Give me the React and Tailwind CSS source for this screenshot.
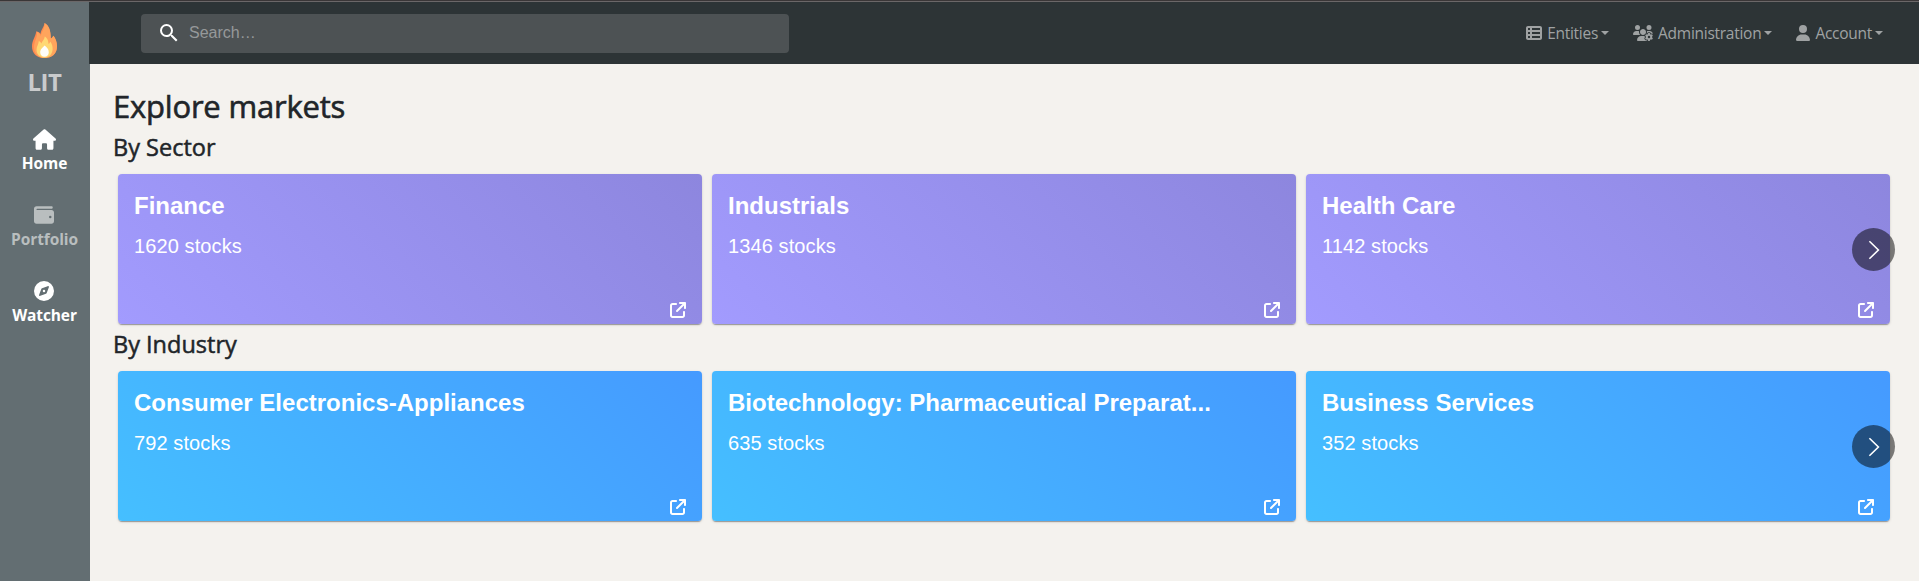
import { MdSearch } from "react-icons/md";
import {
  FaTableList,
  FaUsersGear,
  FaUser,
  FaHouse,
  FaWallet,
  FaCompass,
  FaArrowUpRightFromSquare,
} from "react-icons/fa6";

const sectors = [
  { name: "Finance", count: 1620 },
  { name: "Industrials", count: 1346 },
  { name: "Health Care", count: 1142 },
];

const industries = [
  { name: "Consumer Electronics-Appliances", count: 792 },
  { name: "Biotechnology: Pharmaceutical Preparat...", count: 635 },
  { name: "Business Services", count: 352 },
];

function Flame() {
  return (
    <svg width="25" height="35" viewBox="0 0 25 35" className="block">
      <path d="M12.6 0C17.5 2.8 18.6 8 18.8 15.4C20.3 15.2 20.7 13.5 21.5 12.8C23.6 15.5 25 19.2 25 23.2C25 30.8 20 35 12.5 35C5 35 0 30.6 0 23.4C0 17.2 3.5 14.2 4.3 8.2C6.4 8.8 7.6 9.6 8.5 11C9 6.4 11.8 4.6 12.6 0Z" fill="#ff8a50" />
      <path d="M12.6 0C17.5 2.8 18.6 8 18.8 15.4C20.3 15.2 20.7 13.5 21.5 12.8C23.6 15.5 25 19.2 25 23.2C25 30.8 20 35 12.5 35C7 35 2 31 2 24.5C2 18.5 5.5 15 5 9C7 9.6 8 11 8.8 13C9.5 8.5 13 5.5 12.6 0Z" fill="#ffa45c" />
      <path d="M12.8 13.4C16 15.6 16.2 18 16.6 21C17.5 20.6 17.9 19.6 18.2 18.6C20 21 20.8 23.5 20.6 26.5C20.2 31.5 17 34.6 12.5 34.6C8 34.6 4.5 31.6 4.5 26.8C4.5 23.4 6.6 21.4 6.8 18C8.2 18.4 8.8 19.4 9.4 20.6C9.8 18 12.4 16.8 12.8 13.4Z" fill="#ffd873" />
      <path d="M12.6 22.4C14.6 24 16.8 26 16.8 29.2C16.8 32 15 33.8 12.5 33.8C10 33.8 8.2 32 8.2 29.2C8.2 26 10.8 24.6 12.6 22.4Z" fill="#fffefa" />
    </svg>
  );
}

function SideItem({ icon, label, muted }) {
  return (
    <a className={`flex h-[76px] flex-col items-center ${muted ? "text-[#b9bebf]" : "text-white"}`}>
      <span className="flex h-6 items-center">{icon}</span>
      <span className="text-[15.5px] leading-6 font-bold tracking-[-0.1px]">{label}</span>
    </a>
  );
}

function NavLink({ icon, label }) {
  return (
    <a className="flex items-center text-[#9fa2a3]">
      {icon}
      <span className="ml-[5px] text-[15.5px] leading-6 tracking-[-0.27px]">{label}</span>
      <span className="ml-[3px] border-x-4 border-t-4 border-x-transparent border-t-[#9fa2a3]" />
    </a>
  );
}

function Card({ item, gradient }) {
  return (
    <article className={`flex h-[150px] flex-1 flex-col rounded-[4px] px-4 pt-4 text-white shadow-[0_2px_1px_-1px_rgba(0,0,0,0.2),0_1px_1px_0_rgba(0,0,0,0.14),0_1px_3px_0_rgba(0,0,0,0.12)] ${gradient}`}>
      <h3 className="font-['Liberation_Sans',sans-serif] text-2xl leading-8 font-bold whitespace-nowrap">{item.name}</h3>
      <p className="mt-2 font-['Liberation_Sans',sans-serif] text-xl leading-8 tracking-[0.1px]">{item.count} stocks</p>
      <FaArrowUpRightFromSquare className="mt-auto mb-[6px] self-end" size={16} />
    </article>
  );
}

function Carousel({ items, gradient }) {
  return (
    <div className="relative flex gap-[10px] pl-[5px]">
      {items.map((item) => (
        <Card key={item.name} item={item} gradient={gradient} />
      ))}
      <button className="absolute top-[54px] right-[-5px] flex size-[43px] items-center justify-center rounded-full bg-black/50">
        <svg width="12" height="20" viewBox="0 0 12 20" fill="none" stroke="white" strokeWidth="1.6" className="ml-px">
          <path d="M1.4 1.2L10.4 10L1.4 18.8" />
        </svg>
      </button>
    </div>
  );
}

function SectionTitle({ children, className }) {
  return (
    <h2 className={`mb-3 text-[23.5px] leading-[29px] font-medium [-webkit-text-stroke:0.5px_#212529] ${className}`}>
      {children}
    </h2>
  );
}

export default function App() {
  return (
    <div className="flex h-[581px] w-[1919px] flex-col overflow-hidden bg-[#f4f2ee] font-['Open_Sans',sans-serif]">
      <div className="h-[2px] shrink-0 border-b border-[#6b6768] bg-[#3a3637]" />
      <div className="flex min-h-0 flex-1">
        <aside className="flex w-[90px] shrink-0 flex-col items-center bg-[#636e72] pt-[21px] pr-px">
          <Flame />
          <div className="mt-[6px] mb-[27px] text-2xl leading-9 font-bold tracking-[-0.4px] text-[#c9cbcc]">LIT</div>
          <SideItem icon={<FaHouse size={23} />} label="Home" />
          <SideItem icon={<FaWallet size={20} />} label="Portfolio" muted />
          <SideItem icon={<FaCompass size={20} />} label="Watcher" />
        </aside>
        <div className="flex flex-1 flex-col">
          <header className="-ml-px flex h-[62px] items-center justify-between bg-[#2d3436] pr-9 pl-[52px]">
            <div className="flex h-[39px] w-[648px] items-center rounded-[4px] bg-[#4d5254] pl-4">
              <MdSearch size={24} className="text-white" />
              <span className="ml-2 font-['Liberation_Sans',sans-serif] text-base text-[#96999a]">Search…</span>
            </div>
            <nav className="flex items-center gap-6">
              <NavLink icon={<FaTableList size={16} />} label="Entities" />
              <NavLink icon={<FaUsersGear size={20} />} label="Administration" />
              <NavLink icon={<FaUser className="h-4 w-[14px]" />} label="Account" />
            </nav>
          </header>
          <main className="pr-[29px] pl-[23px] text-[#212529]">
            <h1 className="mt-[23px] text-[31px] leading-[38px] font-medium tracking-[-0.2px] [-webkit-text-stroke:0.6px_#212529]">Explore markets</h1>
            <SectionTitle className="mt-2">By Sector</SectionTitle>
            <Carousel items={sectors} gradient="bg-[linear-gradient(45deg,#a29bfe,#8d86de)]" />
            <SectionTitle className="mt-[6px]">By Industry</SectionTitle>
            <Carousel items={industries} gradient="bg-[linear-gradient(45deg,#45bfff,#459aff)]" />
          </main>
        </div>
      </div>
    </div>
  );
}
